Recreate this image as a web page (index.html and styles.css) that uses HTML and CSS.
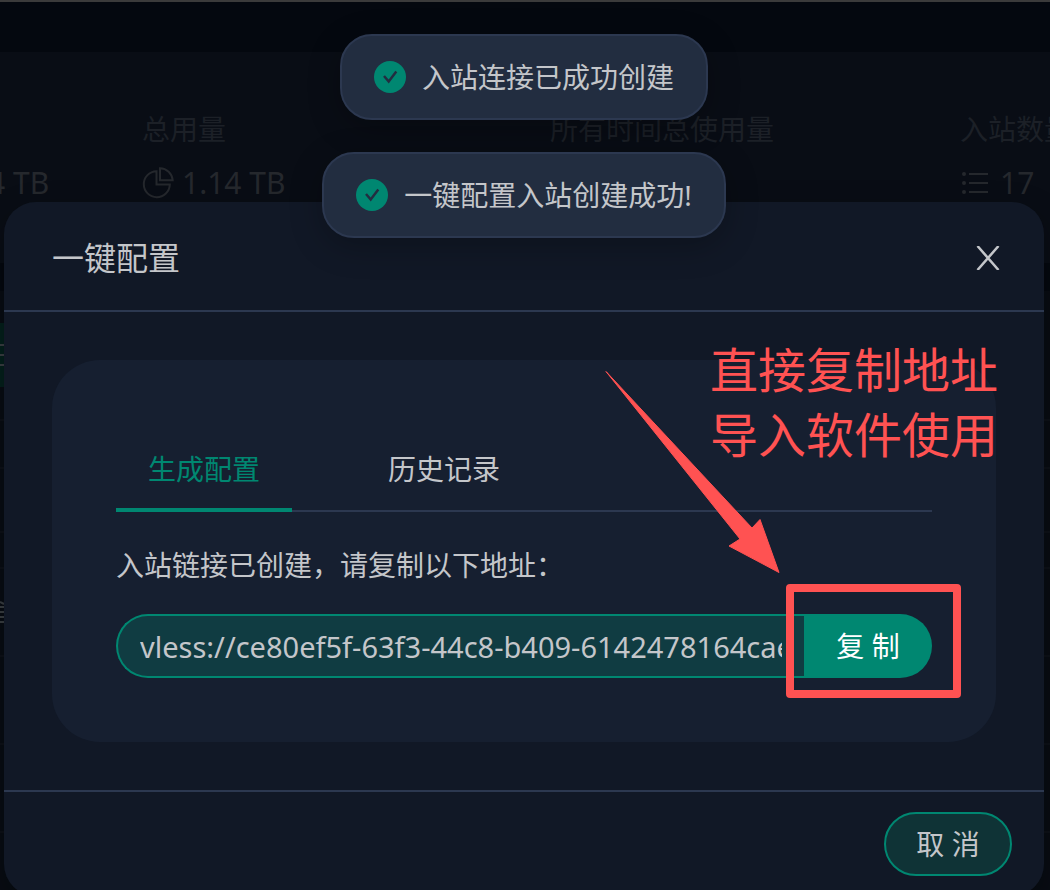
FILE: index.html
```html
<!DOCTYPE html>
<html lang="zh-CN">
<head>
<meta charset="utf-8">
<title>一键配置</title>
<link rel="stylesheet" href="styles.css">
</head>
<body>
<main class="page">
  <section class="stats">
    <div class="stat">
      <div class="stat-value stat-clipped">4 TB</div>
    </div>
    <div class="stat">
      <div class="stat-label">总用量</div>
      <div class="stat-value">
        <svg class="stat-icon" viewBox="0 0 32 32" aria-hidden="true"><path d="M14.500 4.200a13 13 0 1 0 13.300 13.300H14.500z"/><path d="M18 1.300a13 13 0 0 1 12.700 11.900H18z"/></svg>
        <span>1.14 TB</span>
      </div>
    </div>
    <div class="stat">
      <div class="stat-label">所有时间总使用量</div>
    </div>
    <div class="stat">
      <div class="stat-label">入站数量</div>
      <div class="stat-value">
        <svg class="stat-icon" viewBox="0 0 32 32" aria-hidden="true"><path d="M9 7h19M9 16h19M9 25h19"/><circle cx="4" cy="7" r="1"/><circle cx="4" cy="16" r="1"/><circle cx="4" cy="25" r="1"/></svg>
        <span>17</span>
      </div>
    </div>
  </section>
  <section class="list">
    <div class="list-toolbar"><svg class="menu-icon" viewBox="0 0 12 22" aria-hidden="true"><path d="M0 1h12M0 11h12M0 21h12"/></svg></div>
    <div class="list-row row-search"></div>
    <div class="list-row row-short"></div>
    <div class="list-row row-head"></div>
    <div class="list-row row-line"></div>
    <div class="list-row"><svg class="menu-icon" viewBox="0 0 12 22" aria-hidden="true"><path d="M0 1l4 2M0 6h12M0 11h12M0 16h12M0 21h12"/></svg></div>
    <div class="list-row"></div>
    <div class="list-row"></div>
    <div class="list-row"></div>
  </section>
</main>

<div class="modal-layer">
  <section class="modal" role="dialog" aria-labelledby="modal-title">
    <header class="modal-header">
      <h1 class="modal-title" id="modal-title">一键配置</h1>
      <button class="close" type="button" aria-label="关闭"><svg class="close-icon" viewBox="0 0 24 24" aria-hidden="true"><path d="M1.500 0L22.500 24M22.500 0L1.500 24"/></svg></button>
    </header>
    <div class="modal-body">
      <div class="card">
        <div class="tabs" role="tablist">
          <button class="tab tab-active" type="button" role="tab" aria-selected="true">生成配置</button>
          <button class="tab" type="button" role="tab" aria-selected="false">历史记录</button>
        </div>
        <label class="hint" for="link">入站链接已创建，请复制以下地址：</label>
        <div class="copy-row">
          <input class="link-input" id="link" type="text" readonly value="vless://ce80ef5f-63f3-44c8-b409-6142478164cae">
          <div class="copy-wrap">
            <button class="copy" type="button">复 制</button>
            <span class="highlight"></span>
          </div>
        </div>
      </div>
    </div>
    <footer class="modal-footer">
      <button class="cancel" type="button">取 消</button>
    </footer>
    <p class="note">直接复制地址<br>导入软件使用</p>
    <svg class="arrow" viewBox="0 0 176 204" aria-hidden="true"><path d="M2 1.500L148 158L156 149.500L175 202.500L125 176L136 169Z"/></svg>
  </section>
</div>

<div class="toasts">
  <div class="toast" role="status">
    <svg class="toast-icon" viewBox="0 0 32 32" aria-hidden="true"><circle cx="16" cy="16" r="16"/><path d="M10 15L14.700 20.500L22.300 10.500"/></svg>
    <span>入站连接已成功创建</span>
  </div>
  <div class="toast" role="status">
    <svg class="toast-icon" viewBox="0 0 32 32" aria-hidden="true"><circle cx="16" cy="16" r="16"/><path d="M10 15L14.700 20.500L22.300 10.500"/></svg>
    <span>一键配置入站创建成功!</span>
  </div>
</div>
</body>
</html>
```
FILE: styles.css
```css
* {
  box-sizing: border-box;
}

body {
  margin: 0;
  height: 100vh;
  overflow: hidden;
  background: #04080f;
  color: #c4c6ca;
  font-family: "Noto Sans", "Noto Sans CJK SC", sans-serif;
  font-size: 28px;
  line-height: 44px;
}

button,
input {
  font: inherit;
  color: inherit;
}

button {
  border: 0;
  padding: 0;
  background: none;
  cursor: pointer;
}

/* Dimmed dashboard */
.page {
  border-top: 2px solid #3b3b3b;
  padding-top: 50px;
}

.stats {
  display: grid;
  grid-template-columns: 142px 408px 410px 1fr;
  height: 211px;
  padding-top: 55px;
  background: #090d15;
  color: #1c2027;
  white-space: nowrap;
}

.stat {
  display: flex;
  flex-direction: column;
  min-width: 0;
}

.stat-value {
  display: flex;
  align-items: center;
  gap: 8px;
  margin-top: 10px;
  color: #25282d;
  font-size: 30px;
}

.stat-clipped {
  margin-top: 54px;
  margin-left: -12px;
}

.stat-icon {
  width: 32px;
  height: 32px;
  fill: none;
  stroke: currentColor;
  stroke-width: 2;
}

.list {
  margin-top: 28px;
  padding-top: 32px;
  background: #080c13;
}

.list-toolbar {
  display: flex;
  align-items: center;
  width: 12px;
  height: 64px;
  background: #04201c;
}

.menu-icon {
  width: 12px;
  height: 22px;
  fill: none;
  stroke: #3a3f43;
  stroke-width: 2;
}

.list-row {
  display: flex;
  align-items: center;
  height: 88px;
  border-bottom: 2px solid #0d1118;
}

.row-search {
  height: 34px;
}

.row-short {
  height: 48px;
}

.row-head {
  height: 64px;
}

.row-line {
  height: 36px;
}

/* Dialog */
.modal-layer {
  position: absolute;
  inset: 0;
  padding: 202px 6px 0 4px;
  overflow: hidden;
}

.modal {
  position: relative;
  border-radius: 32px;
  background: #111826;
  box-shadow: 0 12px 32px rgba(0, 0, 0, 0.3);
}

.modal-header {
  display: flex;
  align-items: center;
  justify-content: space-between;
  padding: 34px 44px 30px 48px;
  border-bottom: 2px solid #2c3850;
}

.modal-title {
  margin: 0;
  font-size: 32px;
  font-weight: 400;
  line-height: 44px;
}

.close {
  display: flex;
}

.close-icon {
  width: 24px;
  height: 24px;
  fill: none;
  stroke: currentColor;
  stroke-width: 2.5;
}

.modal-body {
  padding: 48px;
}

.card {
  padding: 64px;
  border-radius: 48px;
  background: #161f30;
}

.tabs {
  display: flex;
  gap: 64px;
  border-bottom: 2px solid #2c3850;
}

.tab {
  margin-bottom: -2px;
  padding: 23px 32px 17px;
  border-bottom: 4px solid transparent;
}

.tab-active {
  border-color: #008771;
  color: #008771;
}

.hint {
  display: block;
  margin: 31px 0 27px;
}

.copy-row {
  display: flex;
}

.link-input {
  flex: 1;
  min-width: 0;
  height: 64px;
  padding: 0 22px;
  border: 2px solid #008771;
  border-right: 0;
  border-radius: 32px 0 0 32px;
  outline: 0;
  background: #103c42;
  font-size: 29px;
}

.copy-wrap {
  position: relative;
}

.copy {
  width: 128px;
  height: 64px;
  border-radius: 0 32px 32px 0;
  background: #008771;
  color: #fff;
}

.highlight {
  position: absolute;
  inset: -30px -29px -20px -18px;
  border: 8px solid #ff5252;
  border-radius: 4px;
  pointer-events: none;
}

.modal-footer {
  display: flex;
  justify-content: flex-end;
  padding: 20px 32px;
  border-top: 2px solid #2c3850;
}

.cancel {
  width: 128px;
  height: 64px;
  border: 2px solid #008771;
  border-radius: 32px;
  background: #0f3336;
}

/* Annotations over the dialog */
.note {
  position: absolute;
  top: 135px;
  right: 46px;
  margin: 0;
  color: #ff5252;
  font-size: 48px;
  line-height: 65px;
}

.arrow {
  position: absolute;
  top: 168px;
  right: 264px;
  width: 176px;
  height: 204px;
  fill: #ff5252;
  stroke: #ff5252;
  stroke-width: 1;
  stroke-linejoin: round;
  pointer-events: none;
}

/* Notifications */
.toasts {
  position: absolute;
  top: 34px;
  left: 0;
  right: 2px;
  display: flex;
  flex-direction: column;
  align-items: center;
  gap: 32px;
}

.toast {
  display: flex;
  align-items: center;
  gap: 16px;
  padding: 19px 32px;
  border: 2px solid #2c3850;
  border-radius: 32px;
  background: #222d40;
  box-shadow: 0 8px 32px rgba(0, 0, 0, 0.25);
}

.toast-icon {
  width: 32px;
  height: 32px;
  fill: #008771;
}

.toast-icon path {
  fill: none;
  stroke: #222d40;
  stroke-width: 2.5;
}
```
